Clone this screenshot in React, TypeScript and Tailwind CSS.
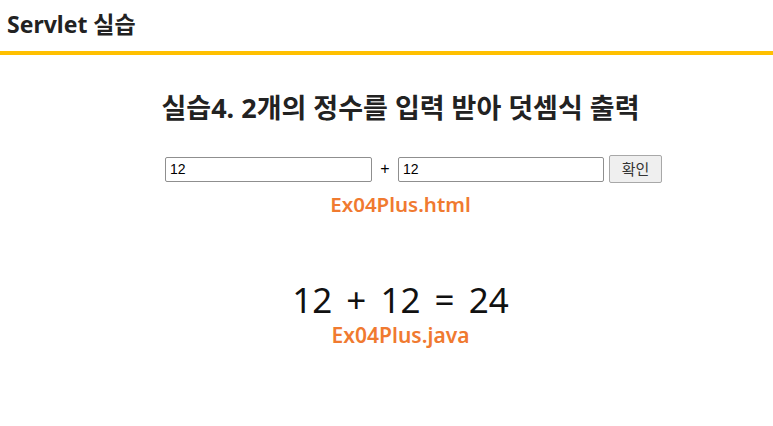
export default function App() {
  return (
    <div className="w-[773px] h-[426px] bg-white font-['Noto_Sans','Noto_Sans_CJK_KR',sans-serif] text-[#222]">
      {/* header */}
      <div className="h-[55px] border-b-4 border-[#ffc000] px-[7px] pt-[8px]">
        <h1 className="text-[23px] font-bold leading-[32px] text-[#222]">Servlet 실습</h1>
      </div>

      <div className="flex flex-col items-center pl-[28px]">
        <h2 className="mt-[34px] text-[27px] font-bold leading-[38px] text-[#222]">
          실습4. 2개의 정수를 입력 받아 덧셈식 출력
        </h2>

        {/* form */}
        <div className="mt-[28px] ml-[26px] flex items-center font-['Liberation_Sans',sans-serif] text-[14px] text-black">
          <input
            defaultValue="12"
            className="w-[207px] h-[25px] border border-[#8f8f8f] rounded-[2px] px-[4px] outline-none"
          />
          <span className="mx-[8px] text-[16px] w-[10px] text-center">+</span>
          <input
            defaultValue="12"
            className="w-[206px] h-[25px] border border-[#8f8f8f] rounded-[2px] px-[4px] outline-none"
          />
          <button className="ml-[5px] w-[53px] h-[28px] border border-[#a8a8a8] rounded-[2px] bg-[#efefef] text-[15px] font-['Noto_Sans_CJK_KR',sans-serif] text-[#333]">
            확인
          </button>
        </div>
        <p className="mt-[6px] text-[20.5px] font-semibold leading-[30px] text-[#f07a30]">Ex04Plus.html</p>

        {/* result */}
        <p className="mt-[58px] text-[35px] leading-[46px] text-[#111] [word-spacing:5px]">12 + 12 = 24</p>
        <p className="mt-[0px] text-[21px] font-semibold leading-[24px] text-[#f07a30]">Ex04Plus.java</p>
      </div>
    </div>
  );
}
